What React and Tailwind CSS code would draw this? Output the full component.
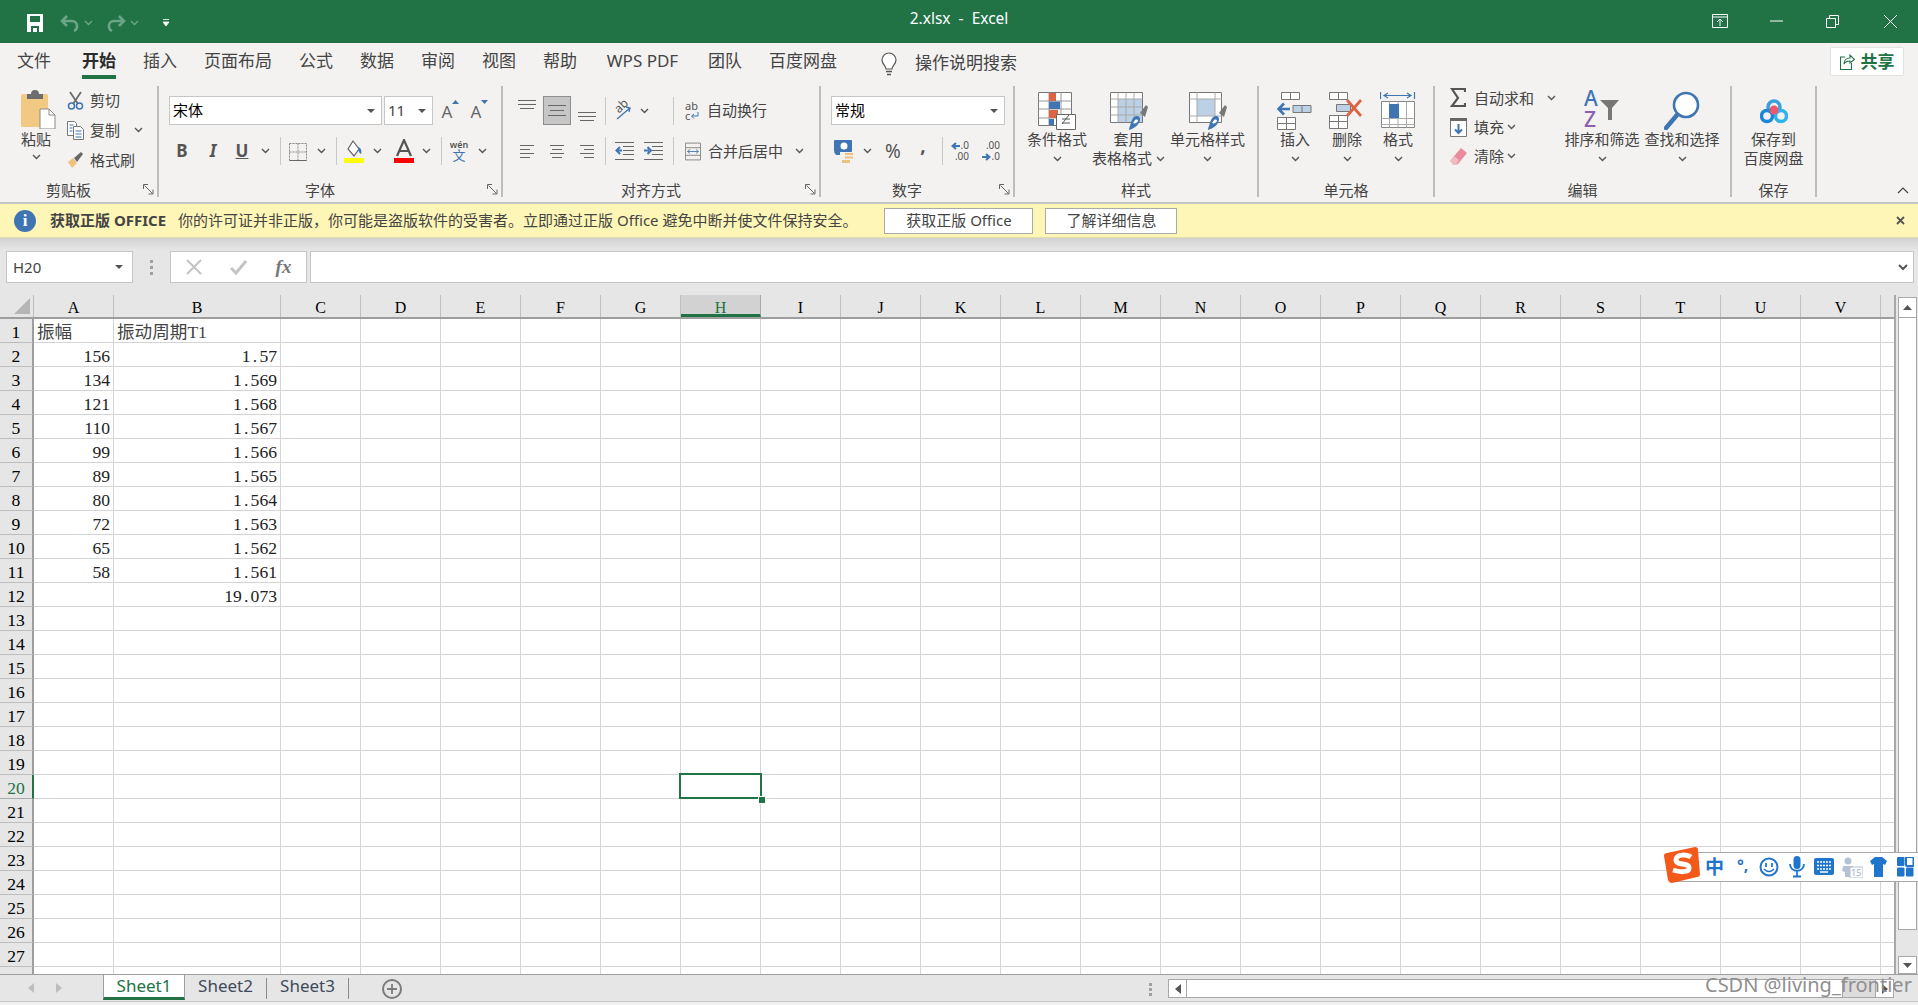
import React from "react";

const UI = "[font-family:'Noto_Sans','Noto_Sans_CJK_SC',sans-serif]";
const CELLF = "[font-family:'Liberation_Serif','Noto_Sans_CJK_SC',serif]";
const BL = "#3f75b3";

const Chev = ({ c = "#555" }) => (
  <svg width="9" height="6" viewBox="0 0 9 6" className="shrink-0"><path d="M1 1l3.5 3.5L8 1" fill="none" stroke={c} strokeWidth="1.4" /></svg>
);
const Slot = ({ cls = "", children }) => <div className={"flex items-center justify-center shrink-0 h-full " + cls}>{children}</div>;
const Sep = ({ cls = "" }) => <div className={"w-px bg-[#c8c8c8] shrink-0 h-[28px] " + cls} />;

const Launcher = () => (
  <svg width="11" height="11" viewBox="0 0 11 11"><path d="M.5 5V.5H5M1.5 1.5l8 8M10 5.5V10H5.5" fill="none" stroke="#666" strokeWidth="1" /></svg>
);

function Group({ cls, label, launcher, children }) {
  return (
    <div className={"shrink-0 h-[111px] flex flex-col border-r-2 border-[#bdbdbd] " + cls}>
      <div className="h-[93px]">{children}</div>
      <div className="h-[18px] grid grid-cols-[1fr_auto_1fr] items-center">
        <div />
        <div className={"text-[15px] leading-[18px] text-[#444] whitespace-nowrap relative top-[2px] " + (launcher ? "mr-[20px]" : "")}>{label}</div>
        <div className="flex justify-end pr-[3px] pt-[3px]">{launcher && <Launcher />}</div>
      </div>
    </div>
  );
}

const BigBtn = ({ cls, icon, l1, l2, chevInline }) => (
  <div className={"flex flex-col items-center shrink-0 text-[15px] text-[#444] " + cls}>
    <div className="h-[39px] mt-[5px] flex items-center justify-center">{icon}</div>
    <div className="h-[19px] leading-[19px] whitespace-nowrap">{l1}</div>
    {l2 ? (
      <div className="h-[19px] leading-[19px] whitespace-nowrap flex items-center gap-[4px]">{l2}{chevInline && <Chev />}</div>
    ) : (
      <div className="h-[19px] flex items-center"><Chev /></div>
    )}
  </div>
);

/* ---------- icons ---------- */
const SaveI = () => <svg width="16" height="18" viewBox="0 0 16 18"><path d="M0 0h16v18H0z" fill="#fff" /><path d="M3 2h10v6H3z" fill="#217346" /><path d="M4 12h8v6H4z" fill="#217346" /><path d="M6 14h4v4H6z" fill="#fff" /></svg>;
const UndoI = ({ flip }) => <svg width="20" height="18" viewBox="0 0 20 18" className={flip ? "-scale-x-100" : ""}><path d="M7 2L2 7l5 5M2 7h10a5 5 0 015 5 5 5 0 01-3 5" fill="none" stroke="#6aa588" strokeWidth="2.6" /></svg>;
const PasteI = () => (
  <svg width="36" height="39" viewBox="0 0 36 39">
    <rect x="0" y="4" width="27" height="33" rx="2" fill="#f1c983" />
    <path d="M6 4h4a4 4 0 018 0h4v5H6z" fill="#6d6d6d" />
    <path d="M19 19h9l6 6v14H19z" fill="#fff" stroke="#8a8a8a" />
    <path d="M28 19v6h6" fill="none" stroke="#8a8a8a" />
  </svg>
);
const ScissorI = () => <svg width="17" height="19" viewBox="0 0 17 19"><path d="M3 1l8 12M14 1L6 13" stroke="#6d6d6d" strokeWidth="1.8" fill="none" /><circle cx="4.5" cy="15" r="3" fill="none" stroke={BL} strokeWidth="1.5" /><circle cx="12.5" cy="15" r="3" fill="none" stroke={BL} strokeWidth="1.5" /></svg>;
const CopyI = () => <svg width="17" height="19" viewBox="0 0 17 19"><path d="M.5.5h7l2 2v12H.5z" fill="#fff" stroke="#777" /><path d="M6.5 5.5h7l3 3v10h-10z" fill="#fff" stroke="#777" /><path d="M2.5 4h4M2.5 7h3M2.5 10h3M8.5 10h6M8.5 13h6M8.5 16h6" stroke={BL} /></svg>;
const BrushI = () => <svg width="17" height="18" viewBox="0 0 17 18"><path d="M1 11l5-4 4 5-5 5z" fill="#eec27c" /><path d="M7 7l7-6 2 2-6 8z" fill="#666" /></svg>;
const GrowA = ({ up }) => (
  <div className="relative w-[18px] h-[24px] flex items-end">
    <span className="text-[17px] leading-[22px] text-[#666]">A</span>
    <svg className="absolute left-[10px] top-[1px]" width="7" height="4" viewBox="0 0 7 4"><path d={up ? "M0 4l3.500-4L7 4z" : "M0 0h7L3.500 4z"} fill={BL} /></svg>
  </div>
);
const BorderI = () => <svg width="18" height="20" viewBox="0 0 18 20"><path d="M.5 2.5h17v17H.5zM9 2.5v17M.5 11h17" fill="none" stroke="#888" strokeDasharray="2 1" /><path d="M.5 19.5h17" stroke="#666" /></svg>;
const FillI = () => (
  <svg width="20" height="24" viewBox="0 0 20 24">
    <path d="M9 2l6 8-5 7-6-7z" fill="#fff" stroke="#666" strokeWidth="1.2" />
    <path d="M14 8c3 1 4 4 3 7-2-1-3-4-3-7z" fill={BL} />
    <rect y="19" width="20" height="5" fill="#ffff00" />
  </svg>
);
const ColorA = () => (
  <svg width="20" height="24" viewBox="0 0 20 24"><path d="M3 17L10 1l7 16M6 12h8" fill="none" stroke="#555" strokeWidth="2.2" /><rect y="19" width="20" height="5" fill="#ff0000" /></svg>
);
const WenI = () => (
  <div className="w-[18px] flex flex-col items-center leading-none">
    <span className="text-[9px] text-[#555] leading-[9px] font-semibold">wén</span>
    <span className="text-[13px] text-[#3f75b3] leading-[13px]">文</span>
  </div>
);
const Lines = ({ w = 18, mode = "c", gap = 4 }) => {
  const ws = [w, w - 4, w, w - 4];
  return (
    <svg width={w} height={gap * 3 + 1} viewBox={`0 0 ${w} ${gap * 3 + 1}`}>
      {ws.map((l, i) => {
        const x = mode === "l" ? 0 : mode === "r" ? w - l : (w - l) / 2;
        return <path key={i} d={`M${x} ${i * gap + 0.5}h${l}`} stroke="#666" />;
      })}
    </svg>
  );
};
const VLines = () => <svg width="18" height="9" viewBox="0 0 18 9"><path d="M0 .5h18M0 4.5h18M2 8.5h14" stroke="#666" /></svg>;
const VLines12 = () => <svg width="18" height="11" viewBox="0 0 18 11"><path d="M0 .5h18M2 5.5h14M0 10.5h18" stroke="#666" /></svg>;
const OrientI = () => (
  <div className="relative w-[22px] h-[22px]">
    <span className="absolute left-[2px] top-[-2px] text-[12px] leading-[16px] text-[#555] -rotate-45">ab</span>
    <svg className="absolute left-0 top-0" width="22" height="22" viewBox="0 0 22 22"><path d="M5 19L18 8M14 7l4 1-1 4" fill="none" stroke={BL} strokeWidth="1.3" /></svg>
  </div>
);
const WrapI = () => (
  <div className="w-[16px] text-[11px] leading-[10px] text-[#555]">
    <div>ab</div>
    <div className="flex items-center">c<svg width="9" height="8" viewBox="0 0 9 8"><path d="M8 0v4H2M4 2L1.500 4 4 6.500" fill="none" stroke={BL} /></svg></div>
  </div>
);
const IndentI = ({ inc }) => (
  <svg width="19" height="18" viewBox="0 0 19 18">
    <path d="M0 .5h19M8 4.500h11M8 8.500h11M8 12.500h11M0 17.500h19" stroke="#666" />
    <path d={inc ? "M0 8.500h5M3.500 5l3.500 3.500L3.500 12" : "M7 8.500H2M5 5L1.500 8.500 5 12"} fill="none" stroke={BL} strokeWidth="2" />
  </svg>
);
const MergeI = () => <svg width="19" height="21" viewBox="0 0 19 21"><path d="M.5.5h18v20H.5zM.5 6h18M.5 15h18" fill="none" stroke="#777" /><path d="M3 10.500h13M6 8l-3 2.500L6 13M13 8l3 2.500L13 13" fill="none" stroke={BL} /></svg>;
const CurrI = () => (
  <svg width="20" height="23" viewBox="0 0 20 23">
    <rect width="18" height="12" rx="1" fill={BL} />
    <circle cx="10" cy="6" r="3.500" fill="#fff" />
    <path d="M0 12h6v3H2z" fill={BL} />
    <path d="M11 13h8v2h-8zM11 16.500h8v2h-8zM8 20h8v3H8z" fill="#eec27c" />
  </svg>
);
const DecI = ({ inc }) => (
  <div className="text-[10px] leading-[11px] text-[#555] w-[24px] relative left-[-3px]">
    <div className="flex items-center justify-end gap-[1px]">
      {inc ? <><svg width="9" height="8" viewBox="0 0 9 8"><path d="M9 4H2M5 1L1.500 4 5 7" fill="none" stroke={BL} strokeWidth="2" /></svg><span>.0</span></> : <span>.00</span>}
    </div>
    <div className="flex items-center justify-end gap-[1px]">
      {inc ? <span>.00</span> : <><svg width="9" height="8" viewBox="0 0 9 8"><path d="M0 4h7M4 1l3.500 3L4 7" fill="none" stroke={BL} strokeWidth="2" /></svg><span>.0</span></>}
    </div>
  </div>
);
const CondI = () => (
  <svg width="38" height="39" viewBox="0 0 38 39">
    <path d="M.5 1.500h33v33H.5z" fill="#fff" stroke="#777" />
    <path d="M11 1.500v33M23 1.500v33M.5 10h33M.5 18h33M.5 27h33" stroke="#999" />
    <path d="M11 2h7v8h-7zM11 19h9v8h-9z" fill="#dc6443" />
    <path d="M11 10.500h11V18H11zM11 28h5v6h-5z" fill={BL} />
    <path d="M18.500 23.500h19v15h-19z" fill="#fff" stroke="#666" />
    <path d="M24 33l7-9M24 28h8M24 32h8" stroke="#555" />
  </svg>
);
const TableI = ({ mini }) => (
  <svg width="38" height="39" viewBox="0 0 38 39">
    <path d="M.5 1.500h32v30H.5z" fill="#fff" stroke="#777" />
    {mini ? (
      <>
        <path d="M8 8h18v17H8z" fill="#bcd0e6" />
        <path d="M8 1.500v30M26 1.500v30M.5 8h32M.5 25h32" stroke="#aaa" />
      </>
    ) : (
      <>
        <path d="M8 8h24v23H8z" fill="#bcd0e6" />
        <path d="M8 1.500v30M16 1.500v30M24 1.500v30M.5 8h32M.5 16h32M.5 24h32" stroke="#aaa" />
      </>
    )}
    <path d="M30 22l6-8 2 2-3 10z" fill="#777" />
    <path d="M24 26c3-2 6-1 6 2 0 5-5 9-11 11 0 0 0-2 1-4 1-4 2-7 4-9z" fill={BL} />
    <path d="M25 29c2-1 3 0 3 1-1 2-3 3-5 2z" fill="#fff" />
  </svg>
);
const InsertI = () => (
  <svg width="36" height="39" viewBox="0 0 36 39">
    <path d="M4.500 1.500h18v7h-18zM13.500 1.500v7M.5 26.500h18v12H.500zM.5 32.500h18M9.500 26.500v12" fill="#fff" stroke="#777" />
    <path d="M16 14.500h18v7H16z" fill="#bcd0e6" stroke="#777" />
    <path d="M25 14.500v7" stroke="#777" />
    <path d="M13 18H2M7 12.500L1.500 18 7 23.500" fill="none" stroke={BL} strokeWidth="2.6" />
  </svg>
);
const DeleteI = () => (
  <svg width="36" height="39" viewBox="0 0 36 39">
    <path d="M.5 1.500h18v7H.5zM9.500 1.500v7M.5 24.500h18v13H.5zM.5 30.500h18M9.500 24.500v13" fill="#fff" stroke="#777" />
    <path d="M7.500 13.500h14v7h-14z" fill="#bcd0e6" stroke="#777" />
    <path d="M18 9l14 16M32 9L18 25" stroke="#dc6443" strokeWidth="2.800" />
  </svg>
);
const FormatI = () => (
  <svg width="36" height="39" viewBox="0 0 36 39">
    <path d="M.5 1v7M34.500 1v7M4 4.500h27M8 2L4 4.500 8 7M27 2l4 2.500L27 7" fill="none" stroke={BL} strokeWidth="1.200" />
    <path d="M1.500 10.500h33v26h-33z" fill="#fff" stroke="#888" />
    <path d="M9.500 10.500v26M26.500 10.500v26M1.500 27.500h33M1.500 33.500h33M18 10.500v26" stroke="#aaa" />
    <path d="M9 13h10v14H9z" fill={BL} />
  </svg>
);
const SigmaI = () => <svg width="16" height="20" viewBox="0 0 16 20"><path d="M15 4V1H2l6 9-6 8h13v-3" fill="none" stroke="#555" strokeWidth="2.200" /></svg>;
const FillDownI = () => <svg width="17" height="19" viewBox="0 0 17 19"><path d="M.5.5h16v18H.5z" fill="#fff" stroke="#777" /><path d="M0 0h17v3H0z" fill="#666" /><path d="M8.500 6v9M5 11.500l3.500 3.500 3.500-3.500" fill="none" stroke={BL} strokeWidth="2" /></svg>;
const EraserI = () => <svg width="17" height="18" viewBox="0 0 17 18"><path d="M11 1l6 5-9 11-3 1-5-4z" fill="#e98b9a" /><path d="M0 14l4-5 5 4-3 5H3z" fill="#f0bcc4" /></svg>;
const SortI = () => (
  <div className="relative w-[38px] h-[39px] font-medium">
    <span className="absolute left-[1px] top-[-3px] text-[21px] leading-[21px] text-[#3f75b3]">A</span>
    <span className="absolute left-[1px] top-[18px] text-[21px] leading-[21px] text-[#8e5fb0]">Z</span>
    <svg className="absolute left-0 top-0" width="38" height="39" viewBox="0 0 38 39"><path d="M17 9h19l-7 8v12h-4V17z" fill="#777" /></svg>
  </div>
);
const FindI = () => (
  <svg width="36" height="39" viewBox="0 0 36 39">
    <circle cx="22" cy="14" r="12" fill="#fff" stroke={BL} strokeWidth="2.600" />
    <path d="M13 24L2 37" stroke={BL} strokeWidth="4.500" strokeLinecap="round" />
  </svg>
);
const BaiduI = () => (
  <svg width="28" height="26" viewBox="0 0 28 26">
    <circle cx="14" cy="9" r="6" fill="none" stroke="#38a1e0" strokeWidth="3.500" />
    <circle cx="7" cy="18" r="5.500" fill="none" stroke="#1c86d8" strokeWidth="3.500" />
    <circle cx="21" cy="18" r="5.500" fill="none" stroke="#2fb3ec" strokeWidth="3.500" />
    <circle cx="14" cy="12" r="4.500" fill="#ea5a6d" />
  </svg>
);
const Bulb = () => <svg width="16" height="24" viewBox="0 0 16 24"><path d="M5 17c0-3-4-5-4-9a7 7 0 0114 0c0 4-4 6-4 9z" fill="#fff" stroke="#555" strokeWidth="1.200" /><path d="M5 19.500h6M6 22.500h4" stroke="#555" strokeWidth="1.500" /></svg>;
const ShareI = () => <svg width="15" height="17" viewBox="0 0 15 17"><path d="M5 4H.5v12.500h11V10" fill="none" stroke="#217346" strokeWidth="1.100" /><path d="M4 11c0-4 3-6 6-6V2l4.500 4.500L10 10V8c-3 0-5 1-6 3z" fill="none" stroke="#217346" strokeWidth="1.100" /></svg>;

const Combo = ({ cls, text, font = true }) => (
  <div className={"h-[29px] bg-white border border-[#c6c6c6] flex items-center justify-between pl-[3px] pr-[6px] shrink-0 " + cls}>
    <span className={"text-[15px] leading-none " + (font ? "text-black" : "text-[#444]")}>{text}</span>
    <svg width="8" height="4" viewBox="0 0 8 4"><path d="M0 0h8L4 4z" fill="#555" /></svg>
  </div>
);

const Small = ({ cls = "", children }) => <span className={"text-[15px] leading-[19px] text-[#444] whitespace-nowrap " + cls}>{children}</span>;

/* ---------- ribbon ---------- */
function Ribbon() {
  return (
    <div className="h-[118px] bg-[#f3f2f1] border-b-2 border-[#c6c6c6] flex items-start">
      <Group cls="w-[159px]" label="剪贴板" launcher>
        <div className="flex">
          <div className="w-[44px] ml-[14px] flex flex-col items-center">
            <div className="h-[39px] mt-[4px] pl-[6px]"><PasteI /></div>
            <div className="h-[19px] mt-[-2px]"><Small>粘贴</Small></div>
            <div className="h-[18px] mt-[2px] flex items-center"><Chev /></div>
          </div>
          <div className="ml-[8px] pt-[2px] flex flex-col gap-[6px]">
            <div className="h-[24px] flex items-center"><Slot cls="w-[18px]"><ScissorI /></Slot><Small cls="ml-[6px]">剪切</Small></div>
            <div className="h-[24px] flex items-center"><Slot cls="w-[18px]"><CopyI /></Slot><Small cls="ml-[6px]">复制</Small><div className="ml-[14px]"><Chev /></div></div>
            <div className="h-[24px] flex items-center"><Slot cls="w-[18px]"><BrushI /></Slot><Small cls="ml-[6px]">格式刷</Small></div>
          </div>
        </div>
      </Group>

      <Group cls="w-[344px]" label="字体" launcher>
        <div className="pl-[10px] pt-[10px]">
          <div className="flex h-[29px]">
            <Combo cls="w-[213px]" text="宋体" />
            <Combo cls="w-[49px] ml-[2px]" text="11" font={false} />
            <Slot cls="w-[32px] pl-[3px]"><GrowA up /></Slot>
            <Slot cls="w-[26px] pl-[3px]"><GrowA /></Slot>
          </div>
          <div className="flex items-center h-[28px] mt-[12px] text-[#555]">
            <Slot cls="w-[26px] text-[17px] font-bold">B</Slot>
            <Slot cls="w-[36px] text-[17px] font-bold italic">I</Slot>
            <Slot cls="w-[22px] text-[17px] font-bold underline">U</Slot>
            <Slot cls="w-[24px]"><Chev /></Slot>
            <Sep cls="ml-[3px]" />
            <Slot cls="w-[34px]"><BorderI /></Slot>
            <Slot cls="w-[12px]"><Chev /></Slot>
            <Sep cls="ml-[9px]" />
            <Slot cls="w-[34px]"><FillI /></Slot>
            <Slot cls="w-[12px]"><Chev /></Slot>
            <Slot cls="w-[36px] ml-[3px]"><ColorA /></Slot>
            <Slot cls="w-[8px]"><Chev /></Slot>
            <Sep cls="ml-[11px]" />
            <Slot cls="w-[34px]"><WenI /></Slot>
            <Slot cls="w-[12px]"><Chev /></Slot>
          </div>
        </div>
      </Group>

      <Group cls="w-[318px]" label="对齐方式" launcher>
        <div className="pl-[10px] pt-[10px]">
          <div className="flex items-center h-[29px]">
            <Slot cls="w-[28px] pb-[12px]"><VLines /></Slot>
            <Slot cls="w-[28px] ml-[2px] bg-[#c6c6c6] border border-[#8e8e8e]"><VLines12 /></Slot>
            <Slot cls="w-[28px] ml-[2px] pt-[12px]"><VLines /></Slot>
            <Sep cls="ml-[4px]" />
            <Slot cls="w-[34px]"><OrientI /></Slot>
            <Slot cls="w-[8px]"><Chev /></Slot>
            <Sep cls="ml-[25px]" />
            <Slot cls="w-[16px] ml-[11px]"><WrapI /></Slot>
            <Small cls="ml-[6px]">自动换行</Small>
          </div>
          <div className="flex items-center h-[28px] mt-[12px]">
            <Slot cls="w-[28px]"><Lines w={14} mode="l" /></Slot>
            <Slot cls="w-[28px] ml-[2px]"><Lines w={14} mode="c" /></Slot>
            <Slot cls="w-[28px] ml-[2px]"><Lines w={14} mode="r" /></Slot>
            <Sep cls="ml-[4px]" />
            <Slot cls="w-[36px]"><IndentI /></Slot>
            <Slot cls="w-[22px]"><IndentI inc /></Slot>
            <Sep cls="ml-[9px]" />
            <Slot cls="w-[16px] ml-[11px]"><MergeI /></Slot>
            <Small cls="ml-[7px]">合并后居中</Small>
            <Slot cls="w-[8px] ml-[12px]"><Chev /></Slot>
          </div>
        </div>
      </Group>

      <Group cls="w-[194px]" label="数字" launcher>
        <div className="pl-[10px] pt-[10px]">
          <Combo cls="w-[174px]" text="常规" />
          <div className="flex items-center h-[28px] mt-[12px]">
            <Slot cls="w-[26px]"><CurrI /></Slot>
            <Slot cls="w-[8px] ml-[6px]"><Chev /></Slot>
            <Slot cls="w-[44px] text-[19px] text-[#555]">%</Slot>
            <Slot cls="w-[16px] text-[19px] font-bold text-[#555] pb-[12px]">,</Slot>
            <Sep cls="ml-[11px]" />
            <Slot cls="w-[34px]"><DecI inc /></Slot>
            <Slot cls="w-[28px]"><DecI /></Slot>
          </div>
        </div>
      </Group>

      <Group cls="w-[244px]" label="样式">
        <div className="flex">
          <BigBtn cls="w-[84px]" icon={<CondI />} l1="条件格式" />
          <BigBtn cls="w-[59px]" icon={<TableI />} l1="套用" l2="表格格式" chevInline />
          <BigBtn cls="w-[99px]" icon={<TableI mini />} l1="单元格样式" />
        </div>
      </Group>

      <Group cls="w-[176px]" label="单元格">
        <div className="flex">
          <BigBtn cls="w-[72px]" icon={<InsertI />} l1="插入" />
          <BigBtn cls="w-[32px]" icon={<DeleteI />} l1="删除" />
          <BigBtn cls="w-[70px]" icon={<FormatI />} l1="格式" />
        </div>
      </Group>

      <Group cls="w-[297px]" label="编辑">
        <div className="flex">
          <div className="w-[129px] shrink-0 flex flex-col gap-[5px] pl-[14px]">
            <div className="h-[24px] flex items-center"><Slot cls="w-[18px]"><SigmaI /></Slot><Small cls="ml-[7px]">自动求和</Small><div className="ml-[13px]"><Chev /></div></div>
            <div className="h-[24px] flex items-center"><Slot cls="w-[18px]"><FillDownI /></Slot><Small cls="ml-[7px]">填充</Small><div className="ml-[3px]"><Chev /></div></div>
            <div className="h-[24px] flex items-center"><Slot cls="w-[18px]"><EraserI /></Slot><Small cls="ml-[7px]">清除</Small><div className="ml-[3px]"><Chev /></div></div>
          </div>
          <BigBtn cls="w-[76px]" icon={<SortI />} l1="排序和筛选" />
          <BigBtn cls="w-[84px]" icon={<FindI />} l1="查找和选择" />
        </div>
      </Group>

      <Group cls="w-[85px]" label="保存">
        <BigBtn cls="w-[83px]" icon={<BaiduI />} l1="保存到" l2="百度网盘" />
      </Group>

      <div className="flex-1 h-[111px] flex items-end justify-end pr-[9px] pb-[3px]">
        <svg width="12" height="7" viewBox="0 0 12 7"><path d="M1 6l5-5 5 5" fill="none" stroke="#444" strokeWidth="1.200" /></svg>
      </div>
    </div>
  );
}

/* ---------- sheet ---------- */
const COLS = "CDEFGHIJKLMNOPQRSTUV".split("");
const AV = ["", "156", "134", "121", "110", "99", "89", "80", "72", "65", "58"];
const BV = ["", "1.57", "1.569", "1.568", "1.567", "1.566", "1.565", "1.564", "1.563", "1.562", "1.561", "19.073"];

const Num = ({ v }) => {
  const [a, b] = v.split(".");
  if (b === undefined) return <span>{v}</span>;
  return <span>{a}<span className="inline-block w-[8.8px] text-center">.</span>{b}</span>;
};

const HCell = ({ cls, label, active }) => (
  <div className={"h-full flex items-center justify-center shrink-0 border-r " + (active ? "bg-[#d2d2d2] border-[#aaa] text-[#217346] border-b-[3px] border-b-[#217346] pt-[7px] " : "border-[#c0c0c0] text-black pt-[4px] ") + cls}>{label}</div>
);

function Row({ n }) {
  const active = n === 20;
  return (
    <div className="flex h-[24px] shrink-0">
      <div className={"w-[34px] shrink-0 bg-[#e6e6e6] border-b pt-[5px] flex items-center justify-center border-r-2 " + (active ? "bg-[#d2d2d2] border-b-[#aaa] border-r-[#217346] text-[#217346]" : "border-b-[#bdbdbd] border-r-[#9e9e9e] text-black")}>{n < 28 ? n : ""}</div>
      <div className="w-[80px] shrink-0 border-r border-b border-[#d4d4d4] pt-[5px] flex items-center justify-end pr-[3px] whitespace-nowrap text-[#222]">
        {n === 1 ? <span className="mr-auto pl-[3px] text-[#444]">振幅</span> : AV[n - 1] || ""}
      </div>
      <div className="w-[167px] shrink-0 border-r border-b border-[#d4d4d4] pt-[5px] flex items-center justify-end pr-[3px] whitespace-nowrap text-[#222]">
        {n === 1 ? <span className="mr-auto pl-[3px] text-[#444]">振动周期T1</span> : BV[n - 1] ? <Num v={BV[n - 1]} /> : ""}
      </div>
      {COLS.map((c) => (
        <div key={c} className="relative w-[80px] shrink-0 border-r border-b border-[#d4d4d4]">
          {active && c === "H" && (
            <>
              <div className="absolute left-[-2px] top-[-2px] w-[83px] h-[26px] border-[2px] border-[#217346] z-10" />
              <div className="absolute left-[77px] top-[21px] w-[6px] h-[6px] bg-[#217346] border border-white box-content z-20" />
            </>
          )}
        </div>
      ))}
      <div className="flex-1 border-b border-[#d4d4d4]" />
    </div>
  );
}

function Sheet() {
  const rows = Array.from({ length: 28 }, (_, i) => i + 1);
  return (
    <div className={"flex h-[679px] bg-white text-[17.6px] leading-none overflow-hidden " + CELLF}>
      <div className="w-[1894px] shrink-0 overflow-hidden flex flex-col">
        <div className="flex h-[24px] shrink-0 bg-[#e6e6e6] border-b-2 border-[#9e9e9e] text-[16px]">
          <div className="w-[34px] shrink-0 border-r border-[#bdbdbd] flex items-end justify-end pr-[3px] pb-[3px]">
            <svg width="16" height="16" viewBox="0 0 16 16"><path d="M16 0v16H0z" fill="#b5b5b5" /></svg>
          </div>
          <HCell cls="w-[80px]" label="A" />
          <HCell cls="w-[167px]" label="B" />
          {COLS.map((c) => <HCell key={c} cls="w-[80px]" label={c} active={c === "H"} />)}
        </div>
        {rows.map((n) => <Row key={n} n={n} />)}
      </div>
      <div className="flex-1 bg-[#e6e6e6] border-l-2 border-[#a8a8a8] flex flex-col items-end pt-[2px] pr-[1px]">
        <div className="w-[19px] h-[21px] bg-white border border-[#a8a8a8] flex items-center justify-center">
          <svg width="9" height="5" viewBox="0 0 9 5"><path d="M4.500 0L9 5H0z" fill="#555" /></svg>
        </div>
        <div className="w-[19px] h-[612px] bg-white border-x border-b border-[#a8a8a8]" />
        <div className="w-[19px] flex-1" />
        <div className="w-[19px] h-[18px] bg-white border border-[#a8a8a8] flex items-center justify-center">
          <svg width="9" height="5" viewBox="0 0 9 5"><path d="M0 0h9L4.500 5z" fill="#555" /></svg>
        </div>
      </div>
    </div>
  );
}

const Tri = ({ left, c = "#bdbdbd" }) => (
  <svg width="6" height="10" viewBox="0 0 6 10"><path d={left ? "M6 0v10L0 5z" : "M0 0v10l6-5z"} fill={c} /></svg>
);

function Tabs() {
  return (
    <div className="h-[28px] bg-[#e6e6e6] border-t border-[#9e9e9e] border-b border-b-[#c6c6c6] flex items-start text-[#3f4a5a] text-[17px]">
      <div className="w-[103px] shrink-0 h-[25px] flex items-center pl-[28px] gap-[22px]"><Tri left /><Tri /></div>
      <div className="w-[82px] h-[25px] shrink-0 bg-white border-x border-[#9e9e9e] border-b-[3px] border-b-[#217346] text-[#217346] flex items-center justify-center leading-none pb-[2px]">Sheet1</div>
      <div className="w-[82px] h-[21px] mt-[3px] shrink-0 border-r border-[#8a8a8a] flex items-center justify-center leading-none pb-[7px]">Sheet2</div>
      <div className="w-[82px] h-[21px] mt-[3px] shrink-0 border-r border-[#8a8a8a] flex items-center justify-center leading-none pb-[7px]">Sheet3</div>
      <div className="w-[20px] h-[20px] ml-[33px] mt-[4px] rounded-full border-2 border-[#7b7b7b] shrink-0 flex items-center justify-center">
        <svg width="10" height="10" viewBox="0 0 10 10"><path d="M5 0v10M0 5h10" stroke="#7b7b7b" strokeWidth="1.800" /></svg>
      </div>
      <div className="flex-1" />
      <div className="w-[18px] h-full flex flex-col items-center gap-[2px] pt-[8px] shrink-0">
        <i className="block w-[3px] h-[3px] bg-[#a0a0a0]" /><i className="block w-[3px] h-[3px] bg-[#a0a0a0]" /><i className="block w-[3px] h-[3px] bg-[#a0a0a0]" />
      </div>
      <div className="w-[726px] h-[19px] mt-[4px] ml-[9px] mr-[24px] shrink-0 flex border border-[#a8a8a8] bg-[#dcdcdc]">
        <div className="w-[18px] bg-white border-r border-[#a8a8a8] flex items-center justify-center"><Tri left c="#555" /></div>
        <div className="w-[656px] bg-white border-r border-[#a8a8a8]" />
        <div className="flex-1" />
        <div className="w-[18px] bg-white border-l border-[#a8a8a8] flex items-center justify-center"><Tri c="#555" /></div>
      </div>
    </div>
  );
}

function Sogou() {
  const B = "#1f75cc";
  return (
    <div className="absolute left-[1664px] top-[852px] w-[254px] h-[30px] z-30 flex items-center">
      <div className="absolute left-[6px] top-0 right-0 h-[30px] bg-white border-y border-[#a9a9a9]" />
      <svg className="absolute left-0 top-[-5px]" width="36" height="36" viewBox="0 0 36 36">
        <path d="M3 6l28-6q3 0 3 3l2 24q0 3-3 3L8 36q-3 0-4-3L0 9q0-3 3-3z" fill="#f4591c" />
        <path d="M27 10c-4-3-15-3-15 3 0 6 13 2 13 8 0 5-10 4-16 2" fill="none" stroke="#fff" strokeWidth="5" />
      </svg>
      <span className={"absolute left-[41px] top-[3px] text-[19px] font-bold leading-[24px] text-[#1f75cc] " + UI}>中</span>
      <span className="absolute left-[73px] top-[1px] text-[16px] font-bold leading-[24px] text-[#1f75cc]">°,</span>
      <svg className="absolute left-[95px] top-[5px]" width="20" height="20" viewBox="0 0 20 20"><circle cx="10" cy="10" r="8.500" fill="none" stroke={B} strokeWidth="2" /><path d="M7 6v4M13 6v4" stroke={B} strokeWidth="1.800" /><path d="M5 12q5 5 10 0" fill="none" stroke={B} strokeWidth="1.600" /></svg>
      <svg className="absolute left-[125px] top-[4px]" width="16" height="22" viewBox="0 0 16 22"><rect x="4.500" y="0" width="7" height="13" rx="3.500" fill={B} /><path d="M1 8c0 9 14 9 14 0M8 15v5M4 20.500h8" fill="none" stroke={B} strokeWidth="1.800" /></svg>
      <svg className="absolute left-[150px] top-[6px]" width="20" height="18" viewBox="0 0 20 18"><rect width="20" height="17" rx="2" fill={B} /><path d="M3 4h14M3 7.500h14M3 11h14" stroke="#fff" strokeWidth="1.500" strokeDasharray="2 1" /><path d="M6 14h8" stroke="#fff" strokeWidth="1.500" /></svg>
      <svg className="absolute left-[177px] top-[5px]" width="22" height="21" viewBox="0 0 22 21"><circle cx="7" cy="4" r="3.500" fill="#b5c2d3" /><path d="M2 9h10v4H9v7H4v-5l-3-1z" fill="#b5c2d3" /><rect x="9" y="10" width="13" height="11" fill="#fff" stroke="#b5c2d3" /></svg>
      <span className="absolute left-[187px] top-[15px] text-[9px] leading-[11px] text-[#9eaec2]">15</span>
      <svg className="absolute left-[206px] top-[5px]" width="17" height="20" viewBox="0 0 17 20"><path d="M5 0h7l5 4-2 4-2-1v13H4V7L2 8 0 4z" fill={B} /></svg>
      <svg className="absolute left-[233px] top-[5px]" width="17" height="20" viewBox="0 0 17 20"><rect width="7.500" height="9" rx="1" fill={B} /><rect x="9" width="7.500" height="9" rx="1" fill="none" stroke={B} strokeWidth="2" /><rect y="10.500" width="7.500" height="9" rx="1" fill={B} /><rect x="9" y="10.500" width="7.500" height="9" rx="1" fill={B} /></svg>
    </div>
  );
}

export default function App() {
  const tabs = ["文件", "开始", "插入", "页面布局", "公式", "数据", "审阅", "视图", "帮助", "WPS PDF", "团队", "百度网盘"];
  return (
    <div className={"relative w-[1918px] h-[1005px] overflow-hidden flex flex-col bg-[#f0f0f0] " + UI}>
      {/* Title bar */}
      <div className="h-[43px] bg-[#217346] grid grid-cols-[1fr_auto_1fr] shrink-0">
        <div className="flex items-center pt-[3px] pl-[27px]">
          <SaveI />
          <div className="ml-[17px]"><UndoI /></div>
          <div className="ml-[4px]"><Chev c="#6aa588" /></div>
          <div className="ml-[13px]"><UndoI flip /></div>
          <div className="ml-[4px]"><Chev c="#6aa588" /></div>
          <svg className="ml-[24px]" width="7" height="8" viewBox="0 0 7 8"><path d="M0 .500h6M0 3h6l-3 4z" fill="#fff" stroke="#fff" strokeWidth=".8" /></svg>
        </div>
        <div className="text-white text-[15.500px] leading-[37px] whitespace-pre">2.xlsx  -  Excel</div>
        <div className="flex items-center justify-end pb-[1px] pr-[21px]">
          <svg width="16" height="14" viewBox="0 0 16 14"><path d="M.5.500h15v13H.5zM.5 3h15M8 12V5M5 8l3-3 3 3" fill="none" stroke="#fff" /></svg>
          <svg className="ml-[42px]" width="13" height="2" viewBox="0 0 13 2"><path d="M0 1h13" stroke="#fff" /></svg>
          <svg className="ml-[43px]" width="13" height="14" viewBox="0 0 13 14"><path d="M.5 4.500h9v9h-9zM3.500 4V1.500h9v9H10" fill="none" stroke="#fff" /></svg>
          <svg className="ml-[45px]" width="13" height="13" viewBox="0 0 13 13"><path d="M0 0l13 13M13 0L0 13" stroke="#fff" /></svg>
        </div>
      </div>

      {/* Menu */}
      <div className="h-[43px] bg-[#f3f2f1] shrink-0 flex items-start pl-[17px] text-[17px] text-[#444]">
        <div className="flex gap-[27px] h-full">
          {tabs.map((t) => (
            <div key={t} className={"h-[36px] flex items-center justify-center whitespace-nowrap border-b-[4px] pt-[4px] " + (t === "开始" ? "font-bold border-[#217346] text-[#2b2b2b] ml-[4px]" : "border-transparent") + (t === "WPS PDF" ? " w-[77px]" : "")}>{t}</div>
          ))}
        </div>
        <div className="ml-[44px] h-[36px] pt-[5px] flex items-center"><Bulb /></div>
        <div className="ml-[18px] h-[36px] pt-[4px] flex items-center">操作说明搜索</div>
        <div className="flex-1" />
        <div className="mt-[4px] mr-[14px] w-[74px] h-[29px] bg-white border border-[#e2e2e2] rounded-[2px] flex items-center justify-center gap-[6px] text-[#217346] font-bold">
          <ShareI />共享
        </div>
      </div>

      <Ribbon />

      {/* Banner */}
      <div className="h-[34px] shrink-0 bg-[#fdf6b7] border-b border-[#e5dfa6] flex items-center text-[15px] text-[#444]">
        <div className="ml-[14px] w-[22px] h-[22px] rounded-full bg-[#3f75b3] flex items-center justify-center text-white font-bold text-[17px] leading-none [font-family:'Liberation_Serif',serif]">i</div>
        <span className="ml-[14px] font-bold whitespace-nowrap">获取正版 OFFICE</span>
        <span className="ml-[12px] whitespace-nowrap">你的许可证并非正版，你可能是盗版软件的受害者。立即通过正版 Office 避免中断并使文件保持安全。</span>
        <div className="ml-[27px] w-[149px] h-[26px] bg-white border border-[#aaa] flex items-center justify-center whitespace-nowrap">获取正版 Office</div>
        <div className="ml-[12px] w-[132px] h-[26px] bg-white border border-[#aaa] flex items-center justify-center whitespace-nowrap">了解详细信息</div>
        <div className="flex-1" />
        <svg className="mr-[13px]" width="9" height="9" viewBox="0 0 9 9"><path d="M1 1l7 7M8 1L1 8" stroke="#555" strokeWidth="1.800" /></svg>
      </div>

      {/* Formula bar */}
      <div className="h-[57px] shrink-0 bg-[#e6e6e6] bg-[linear-gradient(#d2d2d2,#e6e6e6_12px)] flex items-start pt-[13px]">
        <div className="ml-[6px] w-[127px] h-[32px] bg-white border border-[#c6c6c6] flex items-center justify-between pl-[6px] pr-[9px] text-[15px] text-[#444]">
          H20
          <svg width="8" height="4" viewBox="0 0 8 4"><path d="M0 0h8L4 4z" fill="#555" /></svg>
        </div>
        <div className="w-[37px] h-[32px] flex flex-col items-center justify-center gap-[3px]">
          <i className="block w-[3px] h-[3px] bg-[#a0a0a0]" /><i className="block w-[3px] h-[3px] bg-[#a0a0a0]" /><i className="block w-[3px] h-[3px] bg-[#a0a0a0]" />
        </div>
        <div className="w-[137px] h-[32px] bg-white border border-[#c6c6c6] flex items-center">
          <Slot cls="w-[45px]"><svg width="16" height="16" viewBox="0 0 16 16"><path d="M1 1l14 14M15 1L1 15" stroke="#c4c4c4" strokeWidth="2" /></svg></Slot>
          <Slot cls="w-[45px]"><svg width="17" height="15" viewBox="0 0 17 15"><path d="M1 8l5 5L16 1" fill="none" stroke="#c4c4c4" strokeWidth="3" /></svg></Slot>
          <Slot cls="w-[45px] italic font-bold text-[19px] text-[#777] [font-family:'Liberation_Serif',serif]">fx</Slot>
        </div>
        <div className="ml-[3px] w-[1604px] h-[32px] bg-white border border-[#c6c6c6] flex items-center justify-end pr-[5px]">
          <svg width="10" height="7" viewBox="0 0 10 7"><path d="M1 1l4 4 4-4" fill="none" stroke="#555" strokeWidth="2" /></svg>
        </div>
      </div>

      <Sheet />
      <Tabs />
      <div className="flex-1 bg-[#f0f0f0]" />

      <Sogou />
      <div className="absolute left-[1705px] top-[972px] z-30 text-[20px] leading-[26px] text-[#8f8f8f] whitespace-nowrap">CSDN @living_frontier</div>
    </div>
  );
}
